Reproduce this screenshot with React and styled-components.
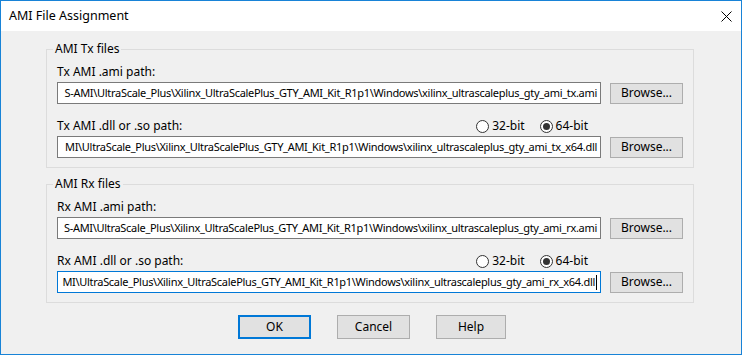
import React from "react";
import styled, { createGlobalStyle } from "styled-components";

const GlobalStyle = createGlobalStyle`
  html, body {
    margin: 0;
    padding: 0;
    background: #f0f0f0;
  }
  body {
    font-family: "Noto Sans", "Liberation Sans", sans-serif;
    font-size: 12px;
    color: #000;
  }
  * {
    box-sizing: border-box;
  }
`;

const fields = {
  tx: [
    {
      label: "Tx AMI .ami path:",
      value:
        "S-AMI\\UltraScale_Plus\\Xilinx_UltraScalePlus_GTY_AMI_Kit_R1p1\\Windows\\xilinx_ultrascaleplus_gty_ami_tx.ami",
    },
    {
      label: "Tx AMI .dll or .so path:",
      value:
        "MI\\UltraScale_Plus\\Xilinx_UltraScalePlus_GTY_AMI_Kit_R1p1\\Windows\\xilinx_ultrascaleplus_gty_ami_tx_x64.dll",
      bits: true,
    },
  ],
  rx: [
    {
      label: "Rx AMI .ami path:",
      value:
        "S-AMI\\UltraScale_Plus\\Xilinx_UltraScalePlus_GTY_AMI_Kit_R1p1\\Windows\\xilinx_ultrascaleplus_gty_ami_rx.ami",
    },
    {
      label: "Rx AMI .dll or .so path:",
      value:
        "MI\\UltraScale_Plus\\Xilinx_UltraScalePlus_GTY_AMI_Kit_R1p1\\Windows\\xilinx_ultrascaleplus_gty_ami_rx_x64.dll",
      bits: true,
      focused: true,
    },
  ],
};

function Field({ label, value, bits, focused }) {
  return (
    <FieldGrid>
      <LabelRow>
        <Label>{label}</Label>
        {bits && (
          <Radios>
            <RadioItem>
              <RadioCircle />
              32-bit
            </RadioItem>
            <RadioItem>
              <RadioCircle $checked />
              64-bit
            </RadioItem>
          </Radios>
        )}
      </LabelRow>
      <PathBox $focused={focused}>
        <PathText>{value}</PathText>
        {focused && <Caret />}
      </PathBox>
      <BrowseButton>Browse...</BrowseButton>
    </FieldGrid>
  );
}

function App() {
  return (
    <>
      <GlobalStyle />
      <Window>
        <TitleBar>
          <Title>AMI File Assignment</Title>
          <CloseIcon width="11" height="11" viewBox="0 0 11 11">
            <path d="M0.5 0.5 L10.5 10.5 M10.5 0.5 L0.5 10.5" stroke="#000" strokeWidth="1" />
          </CloseIcon>
        </TitleBar>
        <Body>
          <Group>
            <Legend>AMI Tx files</Legend>
            {fields.tx.map((f) => (
              <Field key={f.label} {...f} />
            ))}
          </Group>
          <Group>
            <Legend>AMI Rx files</Legend>
            {fields.rx.map((f) => (
              <Field key={f.label} {...f} />
            ))}
          </Group>
          <Actions>
            <DialogButton $primary $width={73}>OK</DialogButton>
            <DialogButton $width={73}>Cancel</DialogButton>
            <DialogButton $width={70}>Help</DialogButton>
          </Actions>
        </Body>
      </Window>
    </>
  );
}

export default App;

const Window = styled.div`
  width: 742px;
  height: 355px;
  border: 1px solid #1883d7;
  display: flex;
  flex-direction: column;
  overflow: hidden;
`;

const TitleBar = styled.div`
  height: 30px;
  flex-shrink: 0;
  background: #fff;
  display: flex;
  align-items: center;
  justify-content: space-between;
  padding: 0 9px 0 8px;
`;

const Title = styled.span`
  font-size: 12.5px;
  line-height: 16px;
`;

const CloseIcon = styled.svg`
  display: block;
`;

const Body = styled.div`
  flex: 1;
  background: #f0f0f0;
  padding: 10px 47px 0 45px;
`;

const Group = styled.fieldset`
  margin: 0;
  width: 648px;
  min-width: 0;
  padding: 0 10px 9px 10px;
  border: 1px solid #dcdcdc;

  & + & {
    margin-top: 8px;
  }
`;

const Legend = styled.legend`
  padding: 0 2px;
  margin-left: -4px;
  line-height: 16px;
`;

const FieldGrid = styled.div`
  display: grid;
  grid-template-columns: 544px 73px;
  column-gap: 9px;
  align-items: center;
  margin-top: 6px;

  & + & {
    margin-top: 13px;
  }
`;

const LabelRow = styled.div`
  grid-column: 1 / -1;
  height: 18px;
  width: 544px;
  display: flex;
  align-items: center;
  justify-content: space-between;
  padding-right: 13px;
  margin-bottom: 1px;
`;

const Label = styled.span`
  line-height: 16px;
`;

const Radios = styled.div`
  display: flex;
  align-items: center;
  gap: 15px;
`;

const RadioItem = styled.label`
  display: flex;
  align-items: center;
  gap: 3px;
  line-height: 16px;
`;

const RadioCircle = styled.span`
  width: 13px;
  height: 13px;
  border-radius: 50%;
  border: 1px solid #333;
  background: #fff;
  display: flex;
  align-items: center;
  justify-content: center;

  &::after {
    content: "";
    width: 7px;
    height: 7px;
    border-radius: 50%;
    background: ${(p) => (p.$checked ? "#333" : "transparent")};
  }
`;

const PathBox = styled.div`
  height: 22px;
  background: #fff;
  border: 1px solid ${(p) => (p.$focused ? "#0078d7" : "#7a7a7a")};
  display: flex;
  align-items: center;
  justify-content: flex-end;
  overflow: hidden;
  white-space: nowrap;
  padding: 0 3px;
`;

const PathText = styled.span`
  font-size: 11px;
  line-height: 16px;
  letter-spacing: -0.3px;
`;

const Caret = styled.span`
  width: 1px;
  height: 15px;
  background: #000;
  margin-left: 1px;
  flex-shrink: 0;
`;

const BrowseButton = styled.button`
  height: 21px;
  width: 73px;
  font: inherit;
  color: #000;
  background: #e1e1e1;
  border: 1px solid #adadad;
  padding: 0;
  line-height: 16px;
`;

const Actions = styled.div`
  display: flex;
  justify-content: center;
  gap: 26px;
  margin-top: 12px;
  padding-left: 4px;
`;

const DialogButton = styled.button`
  height: 24px;
  width: ${(p) => p.$width}px;
  font: inherit;
  color: #000;
  background: #e1e1e1;
  border: ${(p) => (p.$primary ? "2px solid #0078d7" : "1px solid #adadad")};
  padding: 0;
  line-height: 16px;
`;
